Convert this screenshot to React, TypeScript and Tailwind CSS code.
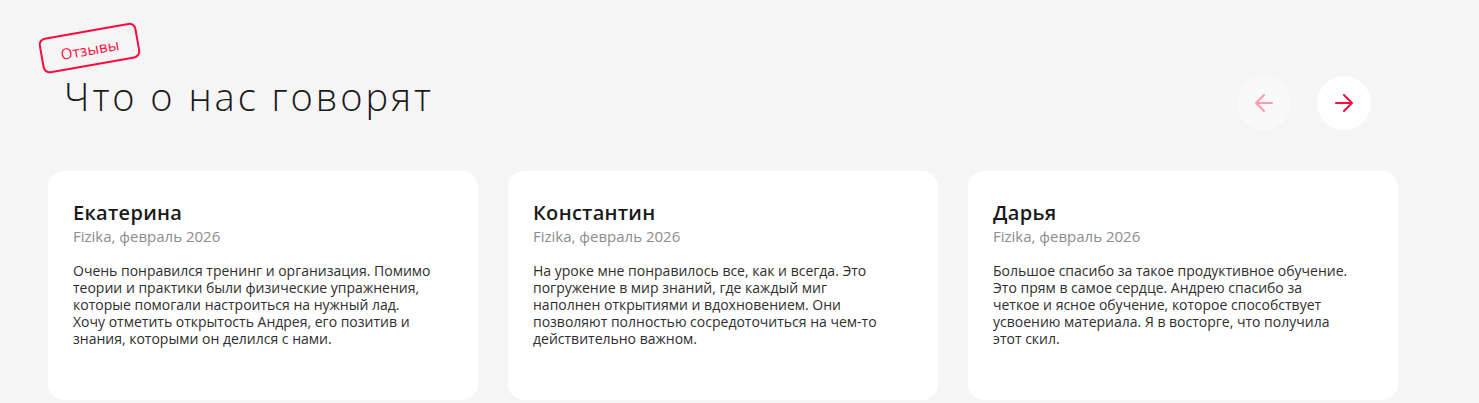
import React from "react";

type Review = { name: string; meta: string; lines: string[] };

const reviews: Review[] = [
  {
    name: "Екатерина",
    meta: "Fizika, февраль 2026",
    lines: [
      "Очень понравился тренинг и организация. Помимо",
      "теории и практики были физические упражнения,",
      "которые помогали настроиться на нужный лад.",
      "Хочу отметить открытость Андрея, его позитив и",
      "знания, которыми он делился с нами.",
    ],
  },
  {
    name: "Константин",
    meta: "Fizika, февраль 2026",
    lines: [
      "На уроке мне понравилось все, как и всегда. Это",
      "погружение в мир знаний, где каждый миг",
      "наполнен открытиями и вдохновением. Они",
      "позволяют полностью сосредоточиться на чем-то",
      "действительно важном.",
    ],
  },
  {
    name: "Дарья",
    meta: "Fizika, февраль 2026",
    lines: [
      "Большое спасибо за такое продуктивное обучение.",
      "Это прям в самое сердце. Андрею спасибо за",
      "четкое и ясное обучение, которое способствует",
      "усвоению материала. Я в восторге, что получила",
      "этот скил.",
    ],
  },
];

function Arrow({ dir }: { dir: "left" | "right" }) {
  return (
    <svg width="18" height="18" viewBox="0 0 18 18" fill="none" stroke="currentColor" strokeWidth="2" strokeLinecap="round" strokeLinejoin="round">
      {dir === "right" ? <path d="M1 9h16M9 1l8 8-8 8" /> : <path d="M17 9H1M9 1L1 9l8 8" />}
    </svg>
  );
}

function ReviewCard({ r }: { r: Review }) {
  return (
    <div className="w-[430px] h-[229px] shrink-0 rounded-[16px] bg-white pl-[25px] pr-[20px] pt-[29px]">
      <div className="text-[20px] leading-[26px] font-semibold tracking-[0.3px] text-[#1a1a1a]">{r.name}</div>
      <div className="text-[15px] leading-[20px] text-[#8c8c8c]">{r.meta}</div>
      <p className="mt-[16px] text-[14px] leading-[17px] text-[#2e2e2e] whitespace-nowrap">
        {r.lines.map((l, i) => (
          <React.Fragment key={i}>
            {l}
            {i < r.lines.length - 1 && <br />}
          </React.Fragment>
        ))}
      </p>
    </div>
  );
}

export default function App() {
  return (
    <div className="w-full h-[403px] overflow-hidden bg-[#f5f5f5] font-['Open_Sans',sans-serif]">
      <div className="pl-[48px] w-[1398px]">
        <div className="flex items-start justify-between h-[171px]">
          <div className="relative pl-[16px] pt-[73px]">
            <div className="absolute left-[-8px] top-[30px] -rotate-[10deg] rounded-[7px] border-2 border-[#ff0a3c] px-[18px] pt-[8px] pb-[6px] text-[15px] leading-[18px] tracking-[0.3px] text-[#ff0a3c]">
              Отзывы
            </div>
            <h1 className="text-[38px] leading-[46px] font-light text-[#1a1a1a] tracking-[2.95px]">Что о нас говорят</h1>
          </div>
          <div className="flex gap-[26px] pt-[76px] pr-[27px]">
            <button className="w-[54px] h-[54px] rounded-full bg-[#f9f9f9] flex items-center justify-center text-[#ff9aac]">
              <Arrow dir="left" />
            </button>
            <button className="w-[54px] h-[54px] rounded-full bg-white flex items-center justify-center text-[#ff0a3c]">
              <Arrow dir="right" />
            </button>
          </div>
        </div>
        <div className="flex gap-[30px]">
          {reviews.map((r) => (
            <ReviewCard key={r.name} r={r} />
          ))}
        </div>
      </div>
    </div>
  );
}
